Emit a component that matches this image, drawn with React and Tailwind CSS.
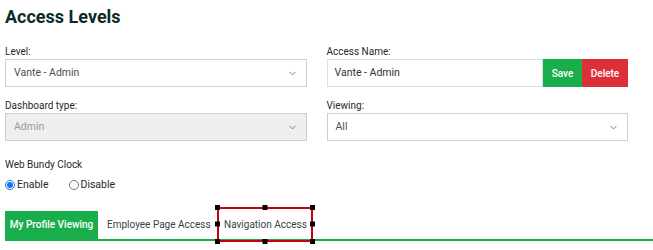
import { ChevronDown } from 'lucide-react';

function Select({ value, disabled }) {
  return (
    <div
      className={`flex h-[28px] items-center justify-between border border-[#cfcfcf] px-[8px] text-[10.5px] ${
        disabled ? 'bg-[#efefef] text-[#9a9a9a]' : 'bg-white text-[#4a4f55]'
      }`}
    >
      <span>{value}</span>
      <ChevronDown size={11} strokeWidth={1.6} className="text-[#555]" />
    </div>
  );
}

function Handle({ className }) {
  return <span className={`absolute h-[5px] w-[5px] bg-black ${className}`} />;
}

export default function App() {
  return (
    <div
      className="h-[250px] w-[653px] overflow-hidden bg-white text-[#1f2a2a]"
      style={{ fontFamily: 'Roboto, "Noto Sans", sans-serif' }}
    >
      <h1 className="pl-[5px] pt-[5px] text-[18px] font-bold leading-[24px] text-[#0d2b29]">Access Levels</h1>

      <div className="mt-[16px] grid w-[628px] grid-cols-2 gap-x-[20px] pl-[5px]">
        <div>
          <label className="block text-[10px] leading-[14px]">Level:</label>
          <Select value="Vante - Admin" />
        </div>
        <div>
          <label className="block text-[10px] leading-[14px]">Access Name:</label>
          <div className="flex h-[28px]">
            <div className="flex flex-1 items-center border border-[#dedede] px-[7px] text-[10.5px] text-[#2c3338]">
              Vante - Admin
            </div>
            <button className="w-[39px] bg-[#1aad4b] text-[10px] font-medium text-white">Save</button>
            <button className="w-[46px] bg-[#dc3038] text-[10px] font-medium text-white">Delete</button>
          </div>
        </div>

        <div className="mt-[12px]">
          <label className="block text-[10px] leading-[14px]">Dashboard type:</label>
          <Select value="Admin" disabled />
        </div>
        <div className="mt-[12px]">
          <label className="block text-[10px] leading-[14px]">Viewing:</label>
          <Select value="All" />
        </div>
      </div>

      <div className="mt-[17px] pl-[5px]">
        <div className="text-[10px] leading-[14px]">Web Bundy Clock</div>
        <div className="mt-[5px] flex items-center text-[10.5px]">
          <span className="flex items-center gap-[2px]">
            <span className="flex h-[10px] w-[10px] items-center justify-center rounded-full border border-[#1a73e8]">
              <span className="h-[6px] w-[6px] rounded-full bg-[#1a73e8]" />
            </span>
            Enable
          </span>
          <span className="ml-[20px] flex items-center gap-[2px]">
            <span className="h-[10px] w-[10px] rounded-full border border-[#777]" />
            Disable
          </span>
        </div>
      </div>

      <div className="ml-[5px] mt-[18px] flex h-[30px] items-stretch border-b-2 border-[#1aad4b] text-[10px]">
        <div className="flex w-[93px] items-center justify-center bg-[#1aad4b] font-medium text-white">My Profile Viewing</div>
        <div className="flex w-[119px] items-center pl-[9px] text-[#3a3f44]">Employee Page Access</div>
        <div className="relative flex w-[96px] items-center pl-[7px] text-[#3a3f44]">
          Navigation Access
          <div className="absolute -bottom-[3px] -top-[4px] left-0 right-0 border-2 border-[#c8000a]">
            <Handle className="-left-[4px] -top-[4px]" />
            <Handle className="left-1/2 -top-[4px] -translate-x-1/2" />
            <Handle className="-right-[4px] -top-[4px]" />
            <Handle className="-left-[4px] top-1/2 -translate-y-1/2" />
            <Handle className="-right-[4px] top-1/2 -translate-y-1/2" />
            <Handle className="-bottom-[4px] -left-[4px]" />
            <Handle className="-bottom-[4px] left-1/2 -translate-x-1/2" />
            <Handle className="-bottom-[4px] -right-[4px]" />
          </div>
        </div>
      </div>
    </div>
  );
}
